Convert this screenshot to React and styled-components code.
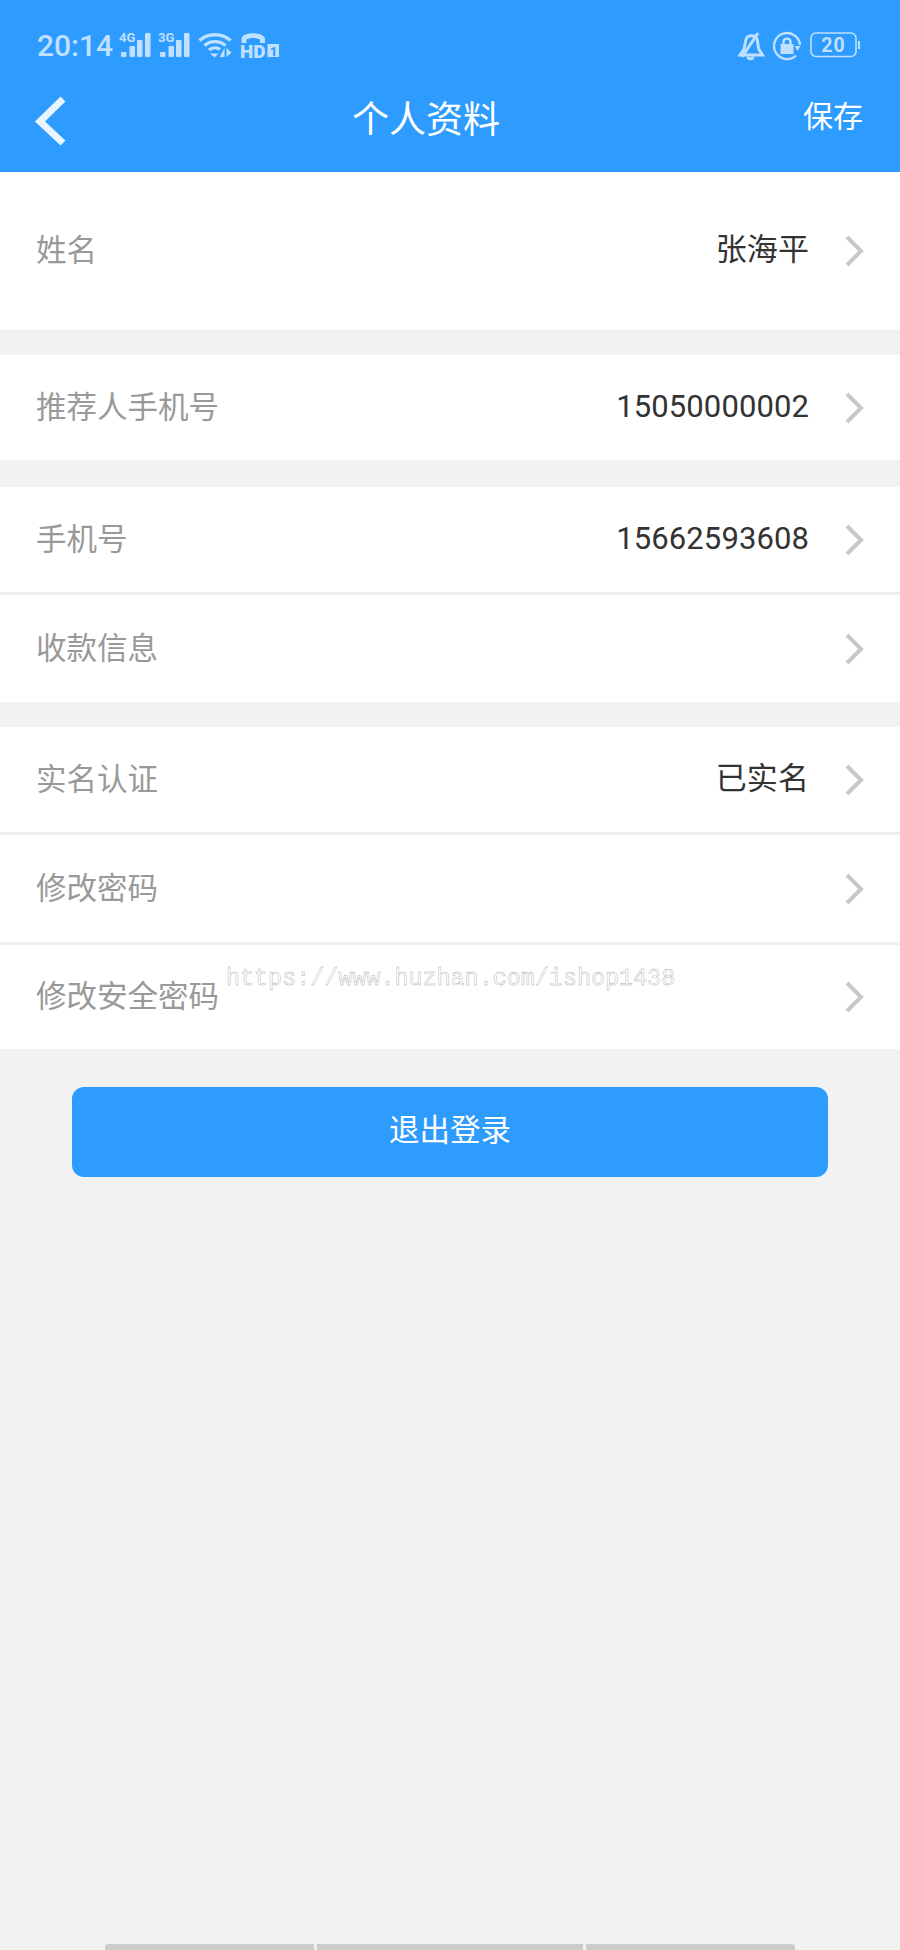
import React from 'react'
import styled, { createGlobalStyle } from 'styled-components';

const Global = createGlobalStyle`
html,body{
    margin:0;
    padding:0;
    background:#f2f2f2;
}
*{
    box-sizing:border-box;
}
`;
const Page = styled.div`
position:relative;
width:900px;
height:1950px;
overflow:hidden;
background:#f2f2f2;
font-family:"Noto Sans CJK SC","Noto Sans",sans-serif;
`;
const Header = styled.header`
height:172px;
background:#2e9bff;
`;
const StatusBar = styled.div`
height:78px;
padding:32px 40px 0 37px;
display:flex;
justify-content:space-between;
align-items:flex-start;
color:#bfe0ff;
svg{
    overflow:visible;
}
`;
const StatusGroup = styled.div`
display:flex;
align-items:flex-start;
gap:${p => p.$gap || 8}px;
`;
const Time = styled.span`
font-family:Roboto,sans-serif;
font-weight:500;
font-size:30px;
line-height:27px;
`;
const NavBar = styled.div`
height:94px;
padding:0 37px 0 34px;
display:grid;
grid-template-columns:1fr auto 1fr;
align-items:center;
color:#fff;
`;
const BackButton = styled.div`
display:flex;
height:60px;
align-items:center;
margin-top:-6px;
`;
const NavTitle = styled.h1`
margin:0 45px 0 0;
font-size:37px;
font-weight:400;
line-height:50px;
position:relative;
top:-8px;
`;
const SaveButton = styled.div`
justify-self:end;
font-size:30px;
line-height:44px;
position:relative;
top:-11px;
`;
const Section = styled.section`
background:#fff;
margin-top:${p => p.$gap || 0}px;
`;
const Row = styled.div`
height:${p => p.$height}px;
padding:0 36px 0 36px;
display:flex;
align-items:center;
border-top:${p => p.$divided ? '3px solid #efefef' : 'none'};
`;
const Label = styled.span`
flex:1;
font-size:30.5px;
line-height:42px;
color:#999;
position:relative;
top:-3px;
`;
const Value = styled.span`
font-size:31px;
line-height:42px;
letter-spacing:0.1px;
color:#333;
position:relative;
top:-1px;
margin-right:36px;
font-family:Roboto,"Noto Sans CJK SC",sans-serif;
`;
const LogoutButton = styled.button`
display:block;
width:756px;
height:90px;
margin:38px 0 0 72px;
border:0;
border-radius:12px;
background:#2e9bff;
color:#fff;
font-family:inherit;
font-size:30.5px;
padding:0 0 8px;
`;
const Watermark = styled.div`
position:absolute;
left:226px;
top:962px;
font-family:"Liberation Mono",monospace;
font-size:23.4px;
line-height:34px;
color:#fff;
-webkit-text-stroke:0.4px #a8a8a8;
white-space:nowrap;
`;
const ScrollBar = styled.div`
position:absolute;
left:105px;
bottom:0;
width:690px;
height:6px;
display:grid;
grid-template-columns:209px 266px 209px;
gap:3px;
border-radius:3px 3px 0 0;
overflow:hidden;
`;
const ScrollPart = styled.div`
background:#cccccc;
`;

const SignalIcon = ({ label }) => (
    <svg width="32" height="25" viewBox="0 0 32 25" fill="currentColor">
        <text x="-1" y="9.5" fontFamily="Roboto,sans-serif" fontWeight="700" fontSize="13">{label}</text>
        <rect x="1" y="20" width="5.5" height="5" rx="1" />
        <rect x="9.5" y="14" width="5.5" height="11" rx="1" />
        <rect x="17" y="8" width="5.5" height="17" rx="1" />
        <rect x="25" y="1" width="5.5" height="24" rx="1" />
    </svg>
);
const WifiIcon = () => (
    <svg width="34" height="26" viewBox="0 0 34 26" fill="none" stroke="currentColor" strokeWidth="3.4">
        <path d="M1.5 8.5C10 .8 24 .8 32.5 8.5" />
        <path d="M6.5 13.5C12.5 8.3 21.5 8.3 27.5 13.5" />
        <path d="M11 18C14.5 15.2 19 15.2 22 17.5" />
        <path d="M12 21.5L16.5 25.5L20.5 21.5Z" fill="currentColor" stroke="none" />
        <path d="M26.5 16V25H21.5Z M28.5 16V25L33.5 20.5Z" fill="currentColor" stroke="none" />
    </svg>
);
const HdIcon = () => (
    <svg width="39" height="26" viewBox="0 0 39 26" fill="currentColor" style={{ marginLeft: 1 }}>
        <path d="M1.5 11V7C1.5 -.8 24.5 -.8 25 7V11H20V7.5C16 5.5 10 5.5 6.5 7.5V11Z" />
        <text x="0" y="25.5" fontFamily="Roboto,sans-serif" fontWeight="900" fontSize="19">HD</text>
        <path d="M27.5 12H39V25H27.5Z" />
        <text x="30" y="23.5" fontFamily="Roboto,sans-serif" fontWeight="900" fontSize="12.5" fill="#2e9bff">1</text>
    </svg>
);
const BellIcon = () => (
    <svg width="26" height="27" viewBox="0 0 26 27" fill="none" stroke="currentColor" strokeWidth="3">
        <path d="M8 7.5C9 3 17 2 19 7C20 9 19.5 14 21 17.5L24.5 23H2L5.5 18C7 15 7 11 8 7.5Z" />
        <path d="M4 25L20 1" />
        <path d="M10 24.5C10 27.5 15 27.5 15 24.5" />
    </svg>
);
const LockIcon = () => (
    <svg width="28" height="28" viewBox="0 0 28 28" fill="none" stroke="currentColor" strokeWidth="2.4">
        <path d="M23 23.5A13 13 0 1 1 27 13" />
        <path d="M21.5 14H27.5L24.5 19Z" fill="currentColor" stroke="none" />
        <rect x="7.5" y="12" width="13" height="10" fill="currentColor" stroke="none" />
        <path d="M10.5 12V10C10.5 5.5 17.5 5.5 17.5 10V12" />
    </svg>
);
const BatteryIcon = () => (
    <svg width="50" height="26" viewBox="0 0 50 26" fill="none">
        <rect x="1" y="1" width="45" height="23.5" rx="5" stroke="currentColor" strokeWidth="1.6" />
        <rect x="48" y="9" width="2" height="8" fill="currentColor" />
        <text x="23.5" y="20" textAnchor="middle" fontFamily="Roboto,sans-serif" fontWeight="700" fontSize="19.5" letterSpacing="1" fill="currentColor">20</text>
    </svg>
);
const BackIcon = () => (
    <svg width="32" height="52" viewBox="0 0 32 52" fill="none" stroke="#e8f4ff" strokeWidth="7">
        <path d="M29 3L6 25.5L29 47" />
    </svg>
);
const ChevronIcon = () => (
    <svg width="19" height="32" viewBox="0 0 19 32" fill="none" stroke="#c8c8c8" strokeWidth="4">
        <path d="M2 2L16 16L2 30" />
    </svg>
);

const ProfileRow = ({ label, value, height, divided }) => (
    <Row $height={height} $divided={divided}>
        <Label>{label}</Label>
        {value && <Value>{value}</Value>}
        <ChevronIcon />
    </Row>
);

export default function App() {
    return (
        <Page>
            <Global />
            <Header>
                <StatusBar>
                    <StatusGroup $gap={7}>
                        <Time>20:14</Time>
                        <SignalIcon label="4G" />
                        <SignalIcon label="3G" />
                        <WifiIcon />
                        <HdIcon />
                    </StatusGroup>
                    <StatusGroup $gap={9}>
                        <BellIcon />
                        <LockIcon />
                        <BatteryIcon />
                    </StatusGroup>
                </StatusBar>
                <NavBar>
                    <BackButton><BackIcon /></BackButton>
                    <NavTitle>个人资料</NavTitle>
                    <SaveButton>保存</SaveButton>
                </NavBar>
            </Header>
            <Section>
                <ProfileRow label="姓名" value="张海平" height={158} />
            </Section>
            <Section $gap={25}>
                <ProfileRow label="推荐人手机号" value="15050000002" height={105} />
            </Section>
            <Section $gap={27}>
                <ProfileRow label="手机号" value="15662593608" height={105} />
                <ProfileRow label="收款信息" height={110} divided />
            </Section>
            <Section $gap={25}>
                <ProfileRow label="实名认证" value="已实名" height={105} />
                <ProfileRow label="修改密码" height={110} divided />
                <ProfileRow label="修改安全密码" height={107} divided />
            </Section>
            <LogoutButton>退出登录</LogoutButton>
            <Watermark>https://www.huzhan.com/ishop1438</Watermark>
            <ScrollBar>
                <ScrollPart />
                <ScrollPart />
                <ScrollPart />
            </ScrollBar>
        </Page>
    )
}
